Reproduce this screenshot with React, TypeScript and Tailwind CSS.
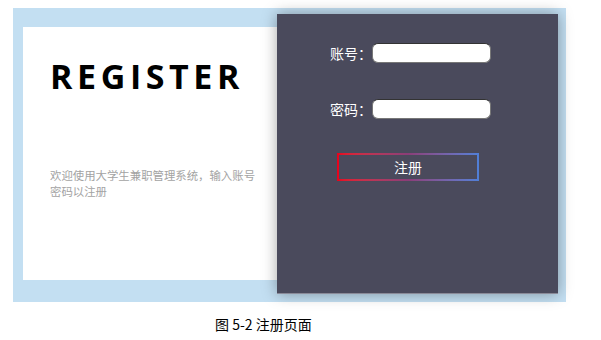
import React from 'react';

const cjk = { fontFamily: '"Noto Sans CJK SC", "Noto Sans", sans-serif' };

const Field: React.FC<{ label: string; type?: string }> = ({ label, type = 'text' }) => (
  <div className="flex items-center h-[20px]">
    <span className="text-[14px] text-white w-[42px] leading-none" style={cjk}>
      {label}：
    </span>
    <input
      type={type}
      className="w-[119px] h-[20px] rounded-[6px] bg-white border border-[#777] border-t-[#333] outline-none"
    />
  </div>
);

export default function App() {
  return (
    <div className="w-[601px] h-[340px] bg-white overflow-hidden">
      {/* figure */}
      <div className="ml-[13px] mt-[8px] w-[553px] h-[294px] bg-[#c3dff2] flex items-start">
        {/* intro card */}
        <div className="ml-[10px] mt-[19px] w-[254px] h-[253px] bg-white pl-[27px] pt-[32px]">
          <h1
            className="text-[34px] font-bold tracking-[0.135em] text-black leading-none"
            style={{ fontFamily: '"Open Sans", "Liberation Sans", sans-serif' }}
          >
            REGISTER
          </h1>
          <p className="mt-[74px] w-[210px] text-[11.4px] leading-[16px] text-[#a3a3a3]" style={cjk}>
            欢迎使用大学生兼职管理系统，输入账号
            <br />
            密码以注册
          </p>
        </div>

        {/* form card */}
        <div className="mt-[6px] w-[281px] h-[280px] bg-[#4a4a5c] shadow-[0_0_14px_rgba(0,0,0,0.35)] border-b border-[#8a8a98] pt-[29px]">
          <div className="pl-[53px] flex flex-col gap-[36px]">
            <Field label="账号" />
            <Field label="密码" type="password" />
          </div>
          <div className="ml-[60px] mt-[34px] w-[142px] h-[28px] p-[2px] bg-gradient-to-r from-[#e8001a] via-[#8a3d78] to-[#4f7fd8]">
            <button
              className="w-full h-full bg-[#4a4a5c] text-white text-[14px] flex items-center justify-center"
              style={cjk}
            >
              注册
            </button>
          </div>
        </div>
      </div>

      <p className="ml-[215px] mt-[15px] text-[14px] text-black leading-none" style={cjk}>
        图 5-2 注册页面
      </p>
    </div>
  );
}
